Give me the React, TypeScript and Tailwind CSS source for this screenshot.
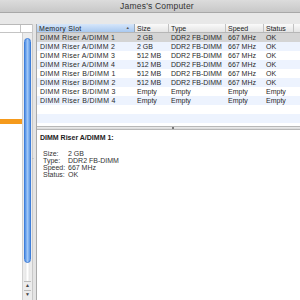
import React from 'react';

const rows = [
    ['DIMM Riser A/DIMM 1', '2 GB', 'DDR2 FB-DIMM', '667 MHz', 'OK'],
    ['DIMM Riser A/DIMM 2', '2 GB', 'DDR2 FB-DIMM', '667 MHz', 'OK'],
    ['DIMM Riser A/DIMM 3', '512 MB', 'DDR2 FB-DIMM', '667 MHz', 'OK'],
    ['DIMM Riser A/DIMM 4', '512 MB', 'DDR2 FB-DIMM', '667 MHz', 'OK'],
    ['DIMM Riser B/DIMM 1', '512 MB', 'DDR2 FB-DIMM', '667 MHz', 'OK'],
    ['DIMM Riser B/DIMM 2', '512 MB', 'DDR2 FB-DIMM', '667 MHz', 'OK'],
    ['DIMM Riser B/DIMM 3', 'Empty', 'Empty', 'Empty', 'Empty'],
    ['DIMM Riser B/DIMM 4', 'Empty', 'Empty', 'Empty', 'Empty'],
];

export default function App() {
    return (
        <div className="w-[300px] h-[300px] overflow-hidden flex flex-col bg-[#e6e6e6] font-['Liberation_Sans',sans-serif] text-[#222]">
            {/* title bar */}
            <div className="h-[13px] bg-gradient-to-b from-[#dcdcdc] to-[#c8c8c8] border-b border-[#a8a8a8] flex items-center justify-center pl-[14px] text-[8.5px] leading-none text-[#333] tracking-[0.2px]">
                James's Computer
            </div>
            <div className="h-[11px] bg-[#e8e8e8]" />

            <div className="flex-1 flex min-h-0">
                {/* left source list */}
                <div className="w-[32px] flex flex-col bg-white border-t border-[#b9b9b9]">
                    <div className="h-[8px] flex border-b border-[#c4c4c4]">
                        <div className="w-[21px] border-r border-[#c4c4c4]" />
                        <div className="flex-1" />
                    </div>
                    <div className="flex-1 flex min-h-0">
                        <div className="w-[22px] flex flex-col">
                            <div className="h-[86px]" />
                            <div className="h-[5px] bg-[#f59a1c]" />
                        </div>
                        <div className="w-[10px] flex flex-col bg-[#ececec] border-l border-[#d0d0d0] px-[1px] pt-[5px]">
                            <div className="h-[225px] rounded-full bg-gradient-to-r from-[#4f8fe6] via-[#9fc6f6] to-[#5c97e4] border border-[#3f7ed8]" />
                            <div className="h-[18px] mx-[1px] rounded-b-full bg-gradient-to-r from-[#e2e2e2] via-white to-[#e2e2e2]" />
                            <div className="h-[9px] flex items-center justify-center text-[5px] text-[#444] border-t border-[#bbb]">▲</div>
                            <div className="h-[9px] flex items-center justify-center text-[5px] text-[#444] border-t border-[#bbb]">▼</div>
                        </div>
                    </div>
                </div>

                {/* split */}
                <div className="w-[4px] bg-[#e4e4e4] border-l border-[#c9c9c9] flex flex-col">
                    <div className="h-[131px]" />
                    <div className="text-[6px] leading-none text-[#666] -ml-[1px]">·</div>
                </div>

                {/* right pane */}
                <div className="flex-1 flex flex-col bg-white border-l border-[#a9a9a9] text-[7px] leading-none whitespace-nowrap">
                    <div className="h-[9px] flex border-b border-[#b6b6b6] bg-gradient-to-b from-[#fafafa] to-[#e4e4e4] text-[#222]">
                        <div className="w-[98px] flex items-center justify-between pl-[2px] pr-[4px] bg-gradient-to-b from-[#d6e6fa] to-[#a9c9f0] border-r border-[#9ab] tracking-[0.3px]">
                            <span>Memory Slot</span>
                            <span className="text-[4px] text-[#555]">▲</span>
                        </div>
                        <div className="w-[34px] flex items-center pl-[2px] border-r border-[#c2c2c2]">Size</div>
                        <div className="w-[57px] flex items-center pl-[2px] border-r border-[#c2c2c2]">Type</div>
                        <div className="w-[38px] flex items-center pl-[2px] border-r border-[#c2c2c2]">Speed</div>
                        <div className="w-[30px] flex items-center pl-[2px] border-r border-[#c2c2c2]">Status</div>
                        <div className="flex-1" />
                    </div>
                    {rows.map((r, i) => (
                        <div
                            key={i}
                            className={
                                'h-[9px] flex items-center text-[#2a2a2a] ' +
                                (i === 0 ? 'bg-[#d4d4d4]' : i % 2 === 1 ? 'bg-[#edf3fe]' : 'bg-white')
                            }
                        >
                            <div className="w-[98px] pl-[3px] tracking-[0.3px]">{r[0]}</div>
                            <div className="w-[34px] pl-[2px]">{r[1]}</div>
                            <div className="w-[57px] pl-[2px]">{r[2]}</div>
                            <div className="w-[38px] pl-[2px]">{r[3]}</div>
                            <div className="w-[30px] pl-[2px]">{r[4]}</div>
                        </div>
                    ))}
                    <div className="h-[9px] bg-white" />
                    <div className="h-[9px] bg-[#edf3fe]" />
                    <div className="h-[3px] bg-white" />

                    {/* horizontal splitter */}
                    <div className="h-[4px] bg-gradient-to-b from-[#ececec] to-[#d8d8d8] border-y border-[#b8b8b8] flex items-center justify-center">
                        <div className="w-[2px] h-[2px] bg-[#777] ml-[8px]" />
                    </div>

                    {/* detail */}
                    <div className="flex-1 bg-white pt-[4px] pl-[3px]">
                        <div className="font-bold text-[#222]">DIMM Riser A/DIMM 1:</div>
                        <div className="mt-[9px] pl-[3px] flex flex-col text-[#333]">
                            {[
                                ['Size:', '2 GB'],
                                ['Type:', 'DDR2 FB-DIMM'],
                                ['Speed:', '667 MHz'],
                                ['Status:', 'OK'],
                            ].map(([k, v]) => (
                                <div key={k} className="h-[7px] flex items-center">
                                    <span className="w-[25px]">{k}</span>
                                    <span>{v}</span>
                                </div>
                            ))}
                        </div>
                    </div>
                </div>
            </div>
        </div>
    );
}
